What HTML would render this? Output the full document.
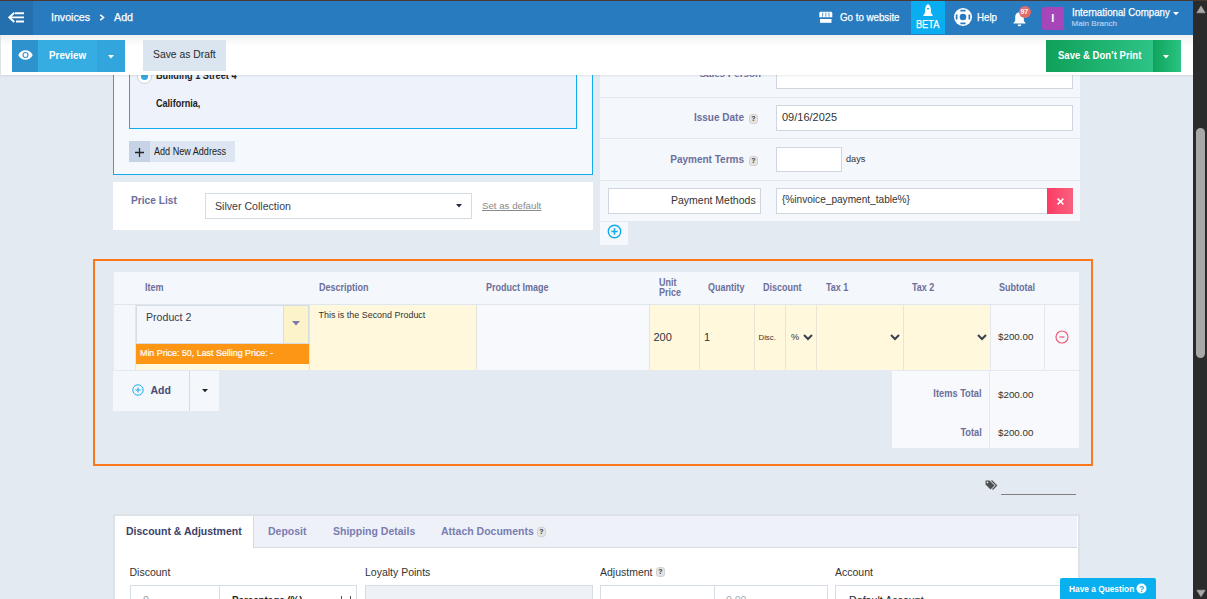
<!DOCTYPE html>
<html><head><meta charset="utf-8">
<style>
*{margin:0;padding:0;box-sizing:border-box}
html,body{width:1207px;height:599px;overflow:hidden;background:#e4eaf2;font-family:"Liberation Sans",sans-serif;color:#333}
.a{position:absolute}
.t{position:absolute;white-space:nowrap;line-height:1}
.b{font-weight:bold}
.w{-webkit-text-stroke:0.25px #fff}
.lbl{color:#6c6f9b;font-weight:bold}
.inp{position:absolute;background:#fff;border:1px solid #cfd6df}
.q{position:absolute;width:9px;height:10px;background:#e4e4e4;border:1px solid #d2d2d2;border-radius:3px;font-size:7px;line-height:8px;text-align:center;color:#333;font-weight:bold}
</style></head><body>
<!-- ===== CONTENT ===== -->
<!-- address card -->
<div class="a" style="left:113px;top:60px;width:480px;height:115px;background:#f5f8fc;border:1px solid #12abeb;border-top:none"></div>
<div class="a" style="left:129px;top:60px;width:448px;height:69px;background:#eef2fa;border:1px solid #12abeb;border-top:none"></div>
<div class="a" style="left:137px;top:69px;width:15px;height:15px;border-radius:50%;background:#fff;border:1px solid #c9d0da"></div>
<div class="a" style="left:141px;top:73px;width:7px;height:7px;border-radius:50%;background:#3aa8dc"></div>
<div class="t b" style="left:156px;top:70.6px;font-size:10.2px;color:#222;transform:scaleX(0.9);transform-origin:0 0">Building 1 Street 4</div>
<div class="t b" style="left:156px;top:98.8px;font-size:10.2px;color:#222;transform:scaleX(0.89);transform-origin:0 0">California,</div>
<div class="a" style="left:129px;top:141px;width:106px;height:21px;background:#dce5f1"></div>
<div class="a" style="left:129px;top:141px;width:21px;height:21px;background:#c6d2e6"></div>
<svg class="a" style="left:135px;top:148px" width="9" height="9" viewBox="0 0 9 9"><path d="M4.5 0V9M0 4.5H9" stroke="#222" stroke-width="1.3"/></svg>
<div class="t" style="left:153.5px;top:147px;font-size:10px;color:#222;transform:scaleX(0.906);transform-origin:0 0">Add New Address</div>
<!-- price list -->
<div class="a" style="left:113px;top:182px;width:480px;height:48px;background:#fff"></div>
<div class="t lbl" style="left:131px;top:196px;font-size:10.2px">Price List</div>
<div class="inp" style="left:205px;top:193px;width:267px;height:26px;border-color:#d3dbe3"></div>
<div class="t" style="left:215px;top:200.8px;font-size:10.6px;color:#3a3a4a">Silver Collection</div>
<svg class="a" style="left:456px;top:204px" width="6" height="4" viewBox="0 0 6 4"><path d="M0 0H6L3 3.5Z" fill="#262b4a"/></svg>
<div class="t" style="left:482px;top:200.5px;font-size:9.7px;color:#8a8a8a;text-decoration:underline">Set as default</div>

<!-- right panel -->
<div class="a" style="left:600px;top:60px;width:480px;height:161px;background:#f4f7fb"></div>
<div class="a" style="left:600px;top:97px;width:480px;height:1px;background:#e2e7ee"></div>
<div class="a" style="left:600px;top:138px;width:480px;height:1px;background:#e2e7ee"></div>
<div class="a" style="left:600px;top:180px;width:480px;height:1px;background:#e2e7ee"></div>
<div class="inp" style="left:776px;top:60px;width:297px;height:29px"></div>
<div class="t lbl" style="right:446px;top:69px;font-size:9.8px">Sales Person</div>
<div class="t lbl" style="right:463px;top:113px;font-size:10px">Issue Date</div>
<div class="q" style="left:749px;top:114px">?</div>
<div class="inp" style="left:776px;top:105px;width:297px;height:26px"></div>
<div class="t" style="left:782px;top:111.5px;font-size:11px;color:#333">09/16/2025</div>
<div class="t lbl" style="right:463px;top:155px;font-size:10px">Payment Terms</div>
<div class="q" style="left:749px;top:156px">?</div>
<div class="inp" style="left:776px;top:147px;width:66px;height:25px"></div>
<div class="t" style="left:846px;top:155px;font-size:9.2px;color:#333">days</div>
<div class="inp" style="left:608px;top:188px;width:153px;height:26px"></div>
<div class="t" style="left:671px;top:194.5px;font-size:10.5px;color:#333">Payment Methods</div>
<div class="inp" style="left:776px;top:188px;width:297px;height:26px"></div>
<div class="t" style="left:782px;top:194.5px;font-size:10.1px;color:#333">{%invoice_payment_table%}</div>
<div class="a" style="left:1047px;top:188px;width:26px;height:26px;background:linear-gradient(90deg,#fc3b65,#f8617f)"></div>
<svg class="a" style="left:1056.5px;top:197.5px" width="7" height="7" viewBox="0 0 7 7"><path d="M0.6 0.6L6.4 6.4M6.4 0.6L0.6 6.4" stroke="#fff" stroke-width="1.5"/></svg>
<div class="a" style="left:600px;top:222px;width:28px;height:23px;background:#f5f8fc"></div>
<svg class="a" style="left:605.8px;top:223.2px" width="17" height="17" viewBox="0 0 17 17"><circle cx="8.5" cy="8.5" r="6.2" fill="none" stroke="#12abeb" stroke-width="1.4"/><path d="M8.5 5.3V11.7M5.3 8.5H11.7" stroke="#12abeb" stroke-width="1.6"/></svg>


<!-- ===== ITEMS ===== -->
<div class="a" style="left:93px;top:259px;width:1000px;height:207px;border:2px solid #fa7819"></div>
<div class="a" style="left:114px;top:272px;width:965px;height:33px;background:#f4f7fb;border-bottom:1px solid #e0e6ee"></div>
<div class="t lbl" style="left:144.5px;top:282.5px;font-size:10.3px;transform:scaleX(0.875);transform-origin:0 0">Item</div>
<div class="t lbl" style="left:318.5px;top:282.5px;font-size:10.3px;transform:scaleX(0.875);transform-origin:0 0">Description</div>
<div class="t lbl" style="left:486px;top:282.5px;font-size:10.3px;transform:scaleX(0.875);transform-origin:0 0">Product Image</div>
<div class="t lbl" style="left:658.5px;top:277.5px;font-size:10.3px;transform:scaleX(0.875);transform-origin:0 0">Unit</div>
<div class="t lbl" style="left:658.5px;top:287.7px;font-size:10.3px;transform:scaleX(0.875);transform-origin:0 0">Price</div>
<div class="t lbl" style="left:708px;top:282.5px;font-size:10.3px;transform:scaleX(0.875);transform-origin:0 0">Quantity</div>
<div class="t lbl" style="left:763px;top:282.5px;font-size:10.3px;transform:scaleX(0.875);transform-origin:0 0">Discount</div>
<div class="t lbl" style="left:825.5px;top:282.5px;font-size:10.3px;transform:scaleX(0.875);transform-origin:0 0">Tax 1</div>
<div class="t lbl" style="left:912px;top:282.5px;font-size:10.3px;transform:scaleX(0.875);transform-origin:0 0">Tax 2</div>
<div class="t lbl" style="left:999px;top:282.5px;font-size:10.3px;transform:scaleX(0.875);transform-origin:0 0">Subtotal</div>
<!-- row -->
<div class="a" style="left:114px;top:305px;width:22px;height:65px;background:#f4f7fb;border-right:1px solid #e3e7ec"></div>
<div class="a" style="left:136px;top:305px;width:173px;height:65px;background:#fff8dc"></div>
<div class="a" style="left:136px;top:305px;width:148px;height:39px;background:#f4f7fb;border:1px solid #d6dde5;border-right:none"></div>
<div class="a" style="left:283px;top:305px;width:26px;height:39px;background:#fdf3c9;border:1px solid #d6dde5"></div>
<svg class="a" style="left:292px;top:321px" width="8" height="5" viewBox="0 0 8 5"><path d="M0 0H8L4 4.5Z" fill="#7b78b0"/></svg>
<div class="t" style="left:146px;top:311.5px;font-size:10.6px;color:#3a3a4a">Product 2</div>
<div class="a" style="left:136px;top:344px;width:173px;height:20px;background:#fd9614"></div>
<div class="t" style="left:140px;top:348.5px;font-size:8.9px;color:#fff;-webkit-text-stroke:0.2px #fff">Min Price: 50, Last Selling Price: -</div>
<div class="a" style="left:309px;top:305px;width:167px;height:65px;background:#fff8dc;border-left:1px solid #e8e5d2"></div>
<div class="t" style="left:318.5px;top:310.5px;font-size:8.95px;color:#333">This is the Second Product</div>
<div class="a" style="left:476px;top:305px;width:173px;height:65px;background:#f7f9fc;border-left:1px solid #e6e5dc"></div>
<div class="a" style="left:649px;top:305px;width:50px;height:65px;background:#fff8dc;border-left:1px solid #e8e5d2"></div>
<div class="a" style="left:699px;top:305px;width:55px;height:65px;background:#fff8dc;border-left:1px solid #e8e5d2"></div>
<div class="a" style="left:754px;top:305px;width:31px;height:65px;background:#fff8dc;border-left:1px solid #e8e5d2"></div>
<div class="a" style="left:785px;top:305px;width:31px;height:65px;background:#fff8dc;border-left:1px solid #e8e5d2"></div>
<div class="a" style="left:816px;top:305px;width:87px;height:65px;background:#fff8dc;border-left:1px solid #e8e5d2"></div>
<div class="a" style="left:903px;top:305px;width:87px;height:65px;background:#fff8dc;border-left:1px solid #e8e5d2"></div>
<div class="a" style="left:990px;top:305px;width:54px;height:65px;background:#f7f9fc;border-left:1px solid #e4e7ec"></div>
<div class="a" style="left:1044px;top:305px;width:35px;height:65px;background:#f7f9fc;border-left:1px solid #e4e7ec"></div>
<div class="t" style="left:653.5px;top:331.5px;font-size:11px;color:#2f3346">200</div>
<div class="t" style="left:704px;top:331.5px;font-size:11px;color:#2f3346">1</div>
<div class="t" style="left:758.5px;top:333.5px;font-size:7.8px;color:#333">Disc.</div>
<div class="t" style="left:791px;top:332.5px;font-size:9.2px;color:#333">%</div>
<svg class="a" style="left:803px;top:334px" width="10" height="7" viewBox="0 0 10 7"><path d="M1 1L5 5L9 1" fill="none" stroke="#3a3f4e" stroke-width="2"/></svg>
<svg class="a" style="left:890px;top:334px" width="10" height="7" viewBox="0 0 10 7"><path d="M1 1L5 5L9 1" fill="none" stroke="#3a3f4e" stroke-width="2"/></svg>
<svg class="a" style="left:977px;top:334px" width="10" height="7" viewBox="0 0 10 7"><path d="M1 1L5 5L9 1" fill="none" stroke="#3a3f4e" stroke-width="2"/></svg>
<div class="t" style="left:998px;top:332px;font-size:9.8px;color:#333">$200.00</div>
<svg class="a" style="left:1055px;top:330px" width="14" height="14" viewBox="0 0 14 14"><circle cx="7" cy="7" r="6" fill="none" stroke="#f05c7a" stroke-width="1.2"/><path d="M4.5 7H9.5" stroke="#f05c7a" stroke-width="1.3"/></svg>
<!-- add -->
<div class="a" style="left:113px;top:371px;width:76px;height:40px;background:#f4f7fb"></div>
<div class="a" style="left:189px;top:371px;width:1px;height:40px;background:#d5dbe3"></div>
<div class="a" style="left:190px;top:371px;width:29px;height:40px;background:#f4f7fb"></div>
<svg class="a" style="left:132px;top:384px" width="12" height="12" viewBox="0 0 12 12"><circle cx="6" cy="6" r="5.2" fill="none" stroke="#12abeb" stroke-width="0.95"/><path d="M6 3.4V8.6M3.4 6H8.6" stroke="#12abeb" stroke-width="1.05"/></svg>
<div class="t b" style="left:150.5px;top:384.5px;font-size:10.5px;color:#474b78">Add</div>
<svg class="a" style="left:202px;top:389px" width="6" height="4" viewBox="0 0 6 4"><path d="M0 0H6L3 3.3Z" fill="#222"/></svg>
<!-- totals -->
<div class="a" style="left:892px;top:371px;width:187px;height:77px;background:#f7f9fc"></div>
<div class="a" style="left:989px;top:371px;width:1px;height:77px;background:#e4e7ec"></div>
<div class="t lbl" style="right:225.5px;top:388.7px;font-size:10.3px;transform:scaleX(0.9);transform-origin:100% 0">Items Total</div>
<div class="t" style="left:998px;top:390.3px;font-size:9.8px;color:#333">$200.00</div>
<div class="t lbl" style="right:225.5px;top:427.8px;font-size:10.3px;transform:scaleX(0.9);transform-origin:100% 0">Total</div>
<div class="t" style="left:998px;top:428.3px;font-size:9.8px;color:#333">$200.00</div>

<!-- tag -->
<svg class="a" style="left:985px;top:480px" width="13" height="11" viewBox="0 0 13 11"><path d="M0.5 1V4.5L5.5 9.5L9.5 5.5L4.5 0.5H1Z" fill="#4f4f4f"/><circle cx="2.4" cy="2.4" r="0.9" fill="#e4eaf2"/><path d="M6.5 0.5L11.5 5.5L7.5 9.5" fill="none" stroke="#4f4f4f" stroke-width="1.2"/></svg>
<div class="a" style="left:1001px;top:493.5px;width:75px;height:1px;background:#808080"></div>

<!-- ===== TABS ===== -->
<div class="a" style="left:113px;top:514px;width:966.5px;height:90px;background:#fff;border:2px solid #dce2e6"></div>
<div class="a" style="left:253px;top:516px;width:824px;height:32px;background:#eef2f8;border-bottom:1px solid #d6dde2;border-left:1px solid #d6dde2"></div>
<div class="t b" style="left:126px;top:525.5px;font-size:10.5px;color:#3c3f66">Discount &amp; Adjustment</div>
<div class="t b" style="left:268px;top:525.5px;font-size:10.5px;color:#7a7cb2">Deposit</div>
<div class="t b" style="left:333px;top:525.5px;font-size:10.5px;color:#7a7cb2">Shipping Details</div>
<div class="t b" style="left:441px;top:525.5px;font-size:10.5px;color:#7a7cb2">Attach Documents</div>
<div class="q" style="left:537px;top:527px">?</div>
<div class="t" style="left:129.5px;top:566.7px;font-size:10.5px;color:#333">Discount</div>
<div class="t" style="left:365px;top:566.7px;font-size:10.5px;color:#333">Loyalty Points</div>
<div class="t" style="left:600px;top:566.7px;font-size:10.5px;color:#333">Adjustment</div>
<div class="q" style="left:656px;top:567px">?</div>
<div class="t" style="left:835px;top:566.7px;font-size:10.5px;color:#333">Account</div>
<div class="inp" style="left:130px;top:585px;width:227px;height:30px;border-color:#d5dde6"></div>
<div class="a" style="left:219px;top:585px;width:1px;height:30px;background:#d5dde6"></div>
<div class="t" style="left:143px;top:594.5px;font-size:10.5px;color:#999">0</div>
<div class="t b" style="left:232px;top:594.5px;font-size:10.5px;color:#222;transform:scaleX(0.93);transform-origin:0 0">Percentage (%)</div>
<div class="a" style="left:341px;top:596px;width:1px;height:3px;background:#555"></div><div class="a" style="left:350px;top:596px;width:1px;height:3px;background:#555"></div>
<div class="a" style="left:365px;top:585px;width:228px;height:30px;background:#eef2f7;border:1px solid #d5dde6"></div>
<div class="inp" style="left:600px;top:585px;width:228px;height:30px;border-color:#d5dde6"></div>
<div class="a" style="left:714px;top:585px;width:1px;height:30px;background:#d5dde6"></div>
<div class="t" style="left:726px;top:594.8px;font-size:10.5px;color:#a5a9b5">0.00</div>
<div class="inp" style="left:835px;top:585px;width:238px;height:30px;border-color:#d5dde6"></div>
<div class="t" style="left:848.5px;top:594.8px;font-size:11.5px;color:#222;transform:scaleX(0.927);transform-origin:0 0">Default Account</div>

<!-- question -->
<div class="a" style="left:1060px;top:578px;width:96px;height:25px;background:#08b0ef;border-radius:2px"></div>
<div class="t b" style="left:1068.5px;top:583.5px;font-size:9.6px;color:#fff;transform:scaleX(0.868);transform-origin:0 0">Have a Question</div>
<svg class="a" style="left:1136px;top:583px" width="11" height="11" viewBox="0 0 11 11"><circle cx="5.5" cy="5.5" r="5" fill="#fff"/><text x="5.5" y="8.6" font-size="8.5" font-weight="bold" text-anchor="middle" fill="#0eb0ec" font-family="Liberation Sans">?</text></svg>

<!-- ===== TOOLBAR ===== -->
<div class="a" style="left:0;top:35px;width:1193px;height:40px;background:linear-gradient(#f1f1f1,#fff 11px);box-shadow:0 1px 2px rgba(0,0,0,0.09)"></div>
<div class="a" style="left:0;top:35px;width:1px;height:40px;background:#dde2e6"></div>
<div class="a" style="left:12px;top:40px;width:26px;height:32px;background:#2e93cc"></div>
<div class="a" style="left:38px;top:40px;width:59px;height:32px;background:#36ade2"></div>
<div class="a" style="left:97px;top:40px;width:28px;height:32px;background:#33a5dd"></div>
<svg class="a" style="left:17.8px;top:50px" width="15" height="10" viewBox="0 0 15 10"><path d="M0.3 5C2.8 -1.3 12.2 -1.3 14.7 5C12.2 11.3 2.8 11.3 0.3 5Z" fill="#fff"/><circle cx="7.5" cy="5" r="3" fill="#2e93cc"/><circle cx="7.5" cy="5" r="1.9" fill="#fff"/></svg>
<div class="t b" style="left:49.3px;top:50.2px;font-size:11.5px;color:#fff;transform:scaleX(0.855);transform-origin:0 0">Preview</div>
<svg class="a" style="left:108px;top:54.5px" width="6" height="4" viewBox="0 0 6 4"><path d="M0 0H6L3 3.5Z" fill="#fff"/></svg>
<div class="a" style="left:143px;top:40px;width:83px;height:31px;background:#dbe5f0"></div>
<div class="t" style="left:153.2px;top:49.3px;font-size:11.5px;color:#2a2a2a;transform:scaleX(0.9);transform-origin:0 0">Save as Draft</div>
<div class="a" style="left:1046px;top:40px;width:107px;height:32px;background:linear-gradient(90deg,#0fa159,#2ec387)"></div>
<div class="a" style="left:1153px;top:40px;width:28px;height:32px;background:linear-gradient(90deg,#10a45b,#2bc383)"></div>
<div class="t b" style="left:1058px;top:49.5px;font-size:11.2px;color:#fff;transform:scaleX(0.854);transform-origin:0 0">Save &amp; Don’t Print</div>
<svg class="a" style="left:1163px;top:55px" width="6" height="4" viewBox="0 0 6 4"><path d="M0 0H6L3 3.5Z" fill="#fff"/></svg>

<!-- ===== TOP BAR ===== -->

<div class="a" style="left:0;top:1px;width:1193px;height:34px;background:#287bbf"></div>
<div class="a" style="left:0;top:1px;width:33px;height:34px;background:#246fae"></div>
<svg class="a" style="left:8px;top:12px" width="17" height="11" viewBox="0 0 17 11"><path d="M6.3 0.8L1.3 5.4L6.3 10" fill="none" stroke="#fff" stroke-width="1.9"/><path d="M1.8 5.4H16 M7 1.3H16 M8 9.5H16" stroke="#fff" stroke-width="1.9"/></svg>
<div class="t w" style="left:50.5px;top:11.5px;font-size:11.5px;color:#fff;transform:scaleX(0.925);transform-origin:0 0">Invoices</div>
<svg class="a" style="left:99px;top:14px" width="6" height="7" viewBox="0 0 6 7"><path d="M1.2 0.8L4.6 3.5L1.2 6.2" fill="none" stroke="#fff" stroke-width="1.5"/></svg>
<div class="t w" style="left:114px;top:11.5px;font-size:11.5px;color:#fff;transform:scaleX(0.93);transform-origin:0 0">Add</div>


<!-- top right -->
<svg class="a" style="left:818.5px;top:11px" width="14" height="12" viewBox="0 0 14 12"><path d="M1.8 0.8H11.8Q13.2 0.8 13.3 2.2V6.3H0.3V2.2Q0.4 0.8 1.8 0.8Z" fill="#fff"/><path d="M3.8 1.5L3.5 5.8M6.8 1.5V5.8M9.8 1.5L10.1 5.8" stroke="#287bbf" stroke-width="0.7"/><path d="M1 8H12.5V11.8H1Z" fill="#fff"/></svg>
<div class="t w" style="left:840px;top:12.1px;font-size:10.5px;color:#fff;transform:scaleX(0.927);transform-origin:0 0">Go to website</div>
<div class="a" style="left:911px;top:1px;width:34px;height:33px;background:#0aaef0"></div>
<svg class="a" style="left:922px;top:3px" width="12" height="14" viewBox="0 0 12 14"><path d="M6 1C7.9 2.2 9 4.5 9 7.3C9 9.5 8.4 11.5 8 12.9H4C3.6 11.5 3 9.5 3 7.3C3 4.5 4.1 2.2 6 1Z" fill="#fff"/><path d="M3.3 9L1 12.9H4.2Z M8.7 9L11 12.9H7.8Z" fill="#fff"/><ellipse cx="6" cy="5.6" rx="1.1" ry="0.9" fill="#0aaef0"/></svg>
<div class="t w" style="left:916.4px;top:20.3px;font-size:10px;color:#fff;transform:scaleX(0.917);transform-origin:0 0">BETA</div>
<svg class="a" style="left:953.5px;top:8px" width="18" height="18" viewBox="-9 -9 18 18"><circle r="9" fill="#fff"/><circle r="3.3" fill="#287bbf"/><path d="M-2.6 -7.2H2.6V-5.4H-2.6Z M-2.6 5.4H2.6V7.2H-2.6Z M-7.2 -2.4V2.4H-5.5V-2.4Z M7.2 -2.4V2.4H5.5V-2.4Z" fill="#287bbf"/></svg>
<div class="t w" style="left:977px;top:12.1px;font-size:10.5px;color:#fff;transform:scaleX(0.925);transform-origin:0 0">Help</div>
<svg class="a" style="left:1012px;top:11px" width="15" height="16" viewBox="0 0 15 16"><path d="M7.5 1.2C10.3 1.2 11.8 3.3 11.8 6V9.8L13.8 12.4H1.2L3.2 9.8V6C3.2 3.3 4.7 1.2 7.5 1.2Z" fill="#fff"/><path d="M5.7 13.4H9.3C9.3 14.5 8.5 15.2 7.5 15.2C6.5 15.2 5.7 14.5 5.7 13.4Z" fill="#fff"/></svg>
<div class="a" style="left:1019px;top:6px;width:12px;height:12px;border-radius:50%;background:#e06c6c"></div>
<div class="t b" style="left:1020.5px;top:8px;font-size:7.2px;color:#fff;letter-spacing:-0.3px">97</div>
<div class="a" style="left:1042px;top:7px;width:22px;height:23px;border-radius:2px;background:#a646b8"></div>
<div class="t b" style="left:1051.3px;top:12.6px;font-size:11px;color:#fff">I</div>
<div class="t w" style="left:1071.5px;top:7.3px;font-size:10.6px;color:#fff;transform:scaleX(0.918);transform-origin:0 0">International Company</div>
<svg class="a" style="left:1173px;top:12px" width="6" height="4" viewBox="0 0 6 4"><path d="M0 0H6L3 3.3Z" fill="#fff"/></svg>
<div class="t" style="left:1071.5px;top:20.3px;font-size:8.1px;color:#b4d0ea;-webkit-text-stroke:0.2px #b4d0ea">Main Branch</div>

<!-- scrollbar -->
<div class="a" style="left:1193px;top:0;width:14px;height:599px;background:#2b2b2b"></div>
<svg class="a" style="left:1195.5px;top:5px" width="10" height="9" viewBox="0 0 10 9"><path d="M0.8 7.8H9.2L5 1Z" fill="#a8a8a8" stroke="#a8a8a8" stroke-width="0.6" stroke-linejoin="round"/></svg>
<div class="a" style="left:0;top:0;width:1207px;height:1px;background:#4a3833"></div>
<div class="a" style="left:1195.7px;top:127.7px;width:9.4px;height:230.3px;border-radius:4.7px;background:#a8a8a8"></div>
<svg class="a" style="left:1195.5px;top:588.5px" width="10" height="9" viewBox="0 0 10 9"><path d="M0.8 1.2H9.2L5 7.8Z" fill="#a8a8a8" stroke="#a8a8a8" stroke-width="0.6" stroke-linejoin="round"/></svg>
</body></html>
